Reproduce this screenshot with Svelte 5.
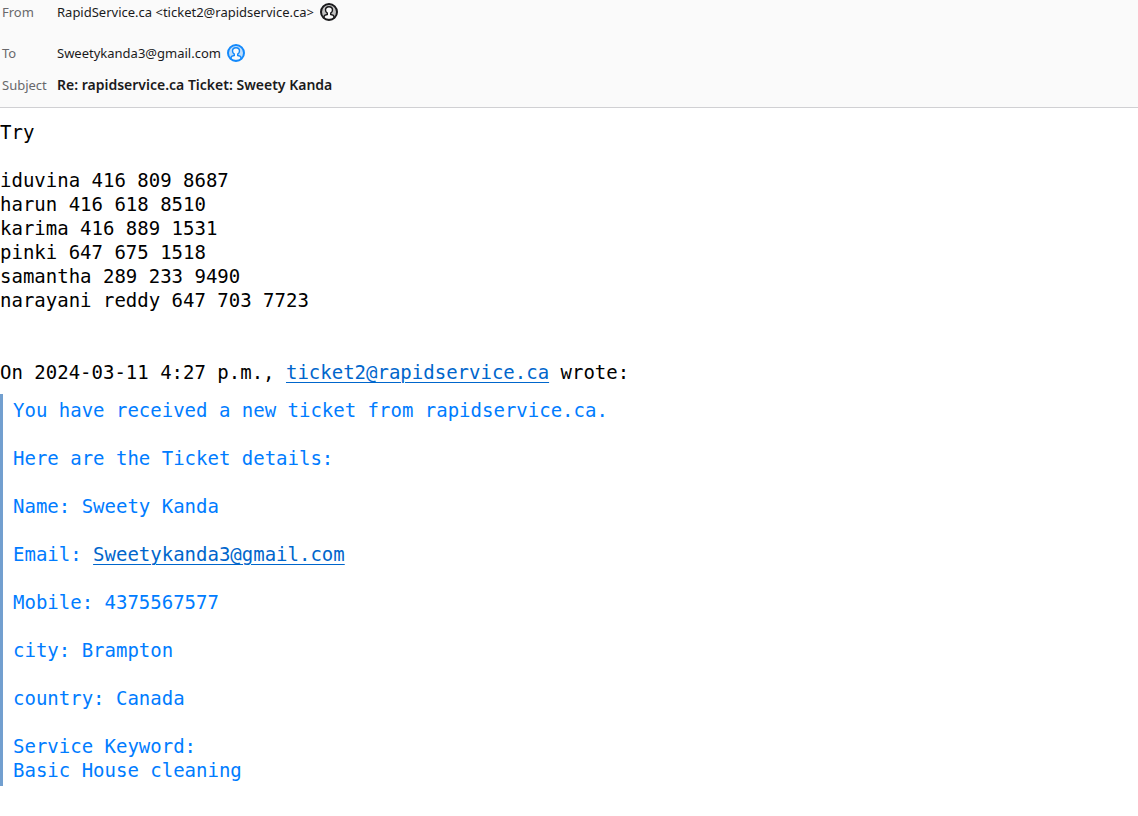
<script lang="ts">
	const sender = { name: 'RapidService.ca', email: 'ticket2@rapidservice.ca' };
	const recipient = 'Sweetykanda3@gmail.com';
	const subject = 'Re: rapidservice.ca Ticket: Sweety Kanda';

	const contacts = [
		'iduvina 416 809 8687',
		'harun 416 618 8510',
		'karima 416 889 1531',
		'pinki 647 675 1518',
		'samantha 289 233 9490',
		'narayani reddy 647 703 7723'
	];
</script>

{#snippet avatar()}
	<svg viewBox="0 0 18 18" aria-hidden="true">
		<circle cx="9" cy="9" r="8" fill="currentColor" fill-opacity="0.25" />
		<path
			class="person"
			d="M4 15.500v-1.700c0-1.300 1.200-2 3.300-2.300v-1.300C6.100 9.400 5.500 8.300 5.500 7 5.500 4.900 7 3.700 9 3.700s3.500 1.200 3.500 3.300c0 1.300-.6 2.400-1.800 3.200v1.300c2.100.3 3.300 1 3.300 2.300v1.700"
		/>
		<circle cx="9" cy="9" r="8" fill="none" stroke="currentColor" stroke-width="2" />
	</svg>
{/snippet}

<header>
	<dl>
		<div class="row from">
			<dt>From</dt>
			<dd>
				{sender.name} &lt;{sender.email}&gt;
				<button type="button" class="contact" aria-label="Contact">{@render avatar()}</button>
			</dd>
		</div>
		<div class="row to">
			<dt>To</dt>
			<dd>
				{recipient}
				<button type="button" class="contact known" aria-label="Contact">{@render avatar()}</button>
			</dd>
		</div>
		<div class="row">
			<dt>Subject</dt>
			<dd class="subject">{subject}</dd>
		</div>
	</dl>
</header>

<main>
	<p>Try</p>

	<ul>
		{#each contacts as contact}
			<li>{contact}</li>
		{/each}
	</ul>

	<p>
		On 2024-03-11 4:27 p.m., <a href="mailto:{sender.email}">{sender.email}</a> wrote:
	</p>

	<blockquote>
		<p>You have received a new ticket from rapidservice.ca.</p>
		<p>Here are the Ticket details:</p>
		<p>Name: Sweety Kanda</p>
		<p>Email: <a href="mailto:{recipient}">{recipient}</a></p>
		<p>Mobile: 4375567577</p>
		<p>city: Brampton</p>
		<p>country: Canada</p>
		<p>Service Keyword:<br />Basic House cleaning</p>
	</blockquote>
</main>

<style>
	:global(body) {
		margin: 0;
		background: #fff;
	}

	header {
		padding-bottom: 12px;
		background: #fafafa;
		border-bottom: 1px solid #d0d0d3;
		font-family: 'Segoe UI', 'Noto Sans', sans-serif;
		font-size: 13px;
		line-height: 20px;
		color: #1a1a1c;
	}

	dl,
	dd,
	ul,
	p,
	blockquote {
		margin: 0;
	}

	.row {
		display: flex;
		align-items: center;
		gap: 8px;
		padding-left: 2px;
	}

	.from {
		min-height: 24px;
		margin-bottom: 17px;
	}

	.to {
		min-height: 24px;
		margin-bottom: 10px;
	}

	dt {
		width: 47px;
		color: #68686b;
	}

	dd {
		display: flex;
		align-items: center;
		gap: 6px;
	}

	.subject {
		font-size: 14px;
		font-weight: 600;
	}

	.contact {
		display: flex;
		padding: 0;
		border: 0;
		background: none;
		color: #1a1a1c;
		cursor: pointer;
	}

	.contact.known {
		color: #1389fb;
	}

	.contact svg {
		width: 18px;
		height: 18px;
	}

	.person {
		fill: #fafafa;
		stroke: currentColor;
		stroke-width: 1.4;
	}

	main {
		padding: 12px 0 30px;
		font-family: Consolas, 'DejaVu Sans Mono', monospace;
		font-size: 19px;
		line-height: 24px;
		color: #000;
	}

	ul {
		margin: 24px 0 48px;
		padding: 0;
		list-style: none;
	}

	a {
		color: #0066cc;
		text-decoration-thickness: 1px;
		text-underline-offset: 3px;
	}

	blockquote {
		display: flex;
		flex-direction: column;
		gap: 24px;
		margin-top: 10px;
		padding: 4px 10px;
		border-left: 3px solid #729fcf;
		color: #007cff;
	}
</style>
